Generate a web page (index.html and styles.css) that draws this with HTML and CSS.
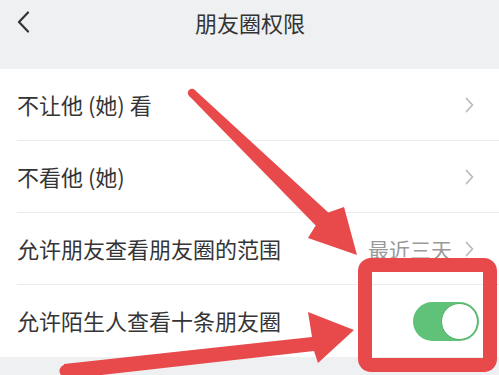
FILE: index.html
```html
<!DOCTYPE html>
<html lang="zh-CN">
<head>
<meta charset="utf-8">
<title>朋友圈权限</title>
<link rel="stylesheet" href="styles.css">
</head>
<body>
<div class="page">
  <header class="nav">
    <svg class="back" width="14" height="22" viewBox="0 0 14 22"><path d="M12 1.5 L3 11 L12 20.5" fill="none" stroke="#333" stroke-width="2.2" stroke-linecap="round" stroke-linejoin="round"/></svg>
    <div class="title">朋友圈权限</div>
  </header>
  <ul class="list">
    <li class="row"><span class="label">不让他 (她) 看</span><span class="right"><svg class="chev" width="9" height="16" viewBox="0 0 9 16"><path d="M1.5 1.5 L7.5 8 L1.5 14.5" fill="none" stroke="#bcbcbc" stroke-width="1.8" stroke-linecap="round" stroke-linejoin="round"/></svg></span></li>
    <li class="row"><span class="label">不看他 (她)</span><span class="right"><svg class="chev" width="9" height="16" viewBox="0 0 9 16"><path d="M1.5 1.5 L7.5 8 L1.5 14.5" fill="none" stroke="#bcbcbc" stroke-width="1.8" stroke-linecap="round" stroke-linejoin="round"/></svg></span></li>
    <li class="row"><span class="label">允许朋友查看朋友圈的范围</span><span class="right"><span class="value">最近三天</span><svg class="chev" width="9" height="16" viewBox="0 0 9 16"><path d="M1.5 1.5 L7.5 8 L1.5 14.5" fill="none" stroke="#bcbcbc" stroke-width="1.8" stroke-linecap="round" stroke-linejoin="round"/></svg></span></li>
    <li class="row last"><span class="label">允许陌生人查看十条朋友圈</span><span class="right"><span class="switch"><span class="knob"></span></span></span></li>
  </ul>
  <svg class="marks" width="499" height="375" viewBox="0 0 499 375">
    <g fill="#e8494b">
      <polygon points="194.8,90.1 328.3,212.6 344,207 357,255 308,238 315.7,225.4 189.2,95.9"/>
      <circle cx="192" cy="93" r="4.2"/>
      <polygon points="64,364 312,337 308,312 354,330 318,363 314,351 66,379"/>
      <circle cx="66" cy="371" r="6.5"/>
    </g>
    <rect x="365" y="265" width="125" height="100" rx="6" ry="6" fill="none" stroke="#e8494b" stroke-width="14"/>
  </svg>
</div>
</body>
</html>
```
FILE: styles.css
```css
html, body {
  margin: 0;
  padding: 0;
}
body {
  background: #eef0f2;
  font-family: "Noto Sans CJK SC", "Noto Sans", sans-serif;
  color: #353535;
}
.page {
  position: relative;
  width: 499px;
  height: 375px;
  overflow: hidden;
}
.nav {
  height: 69px;
  display: flex;
  align-items: flex-start;
  justify-content: center;
  position: relative;
}
.back {
  position: absolute;
  left: 16px;
  top: 11px;
}
.title {
  font-size: 22px;
  line-height: 22px;
  padding-top: 11px;
  color: #333;
  padding-left: 1px;
}
.list {
  list-style: none;
  margin: 0;
  padding: 0 0 0 17px;
  background: #fff;
}
.row {
  height: 72px;
  display: flex;
  align-items: center;
  justify-content: space-between;
  border-bottom: 1px solid #ececec;
  box-sizing: border-box;
  padding-right: 25px;
}
.row.last {
  border-bottom: none;
  padding-right: 20px;
}
.label {
  font-size: 22px;
  line-height: 24px;
  color: #353535;
  padding-bottom: 2px;
}
.right {
  display: flex;
  align-items: center;
  gap: 13px;
}
.value {
  font-size: 21px;
  color: #9a9a9a;
  line-height: 24px;
}
.chev {
  display: block;
}
.switch {
  width: 66px;
  height: 39px;
  border-radius: 20px;
  background: #60c179;
  display: flex;
  justify-content: flex-end;
  align-items: center;
  box-sizing: border-box;
  padding: 1px;
  margin-top: 1px;
}
.knob {
  width: 37px;
  height: 37px;
  border-radius: 50%;
  background: #fff;
  box-sizing: border-box;
  border: 1.5px solid #4fae67;
}
.marks {
  position: absolute;
  left: 0;
  top: 0;
}
```
